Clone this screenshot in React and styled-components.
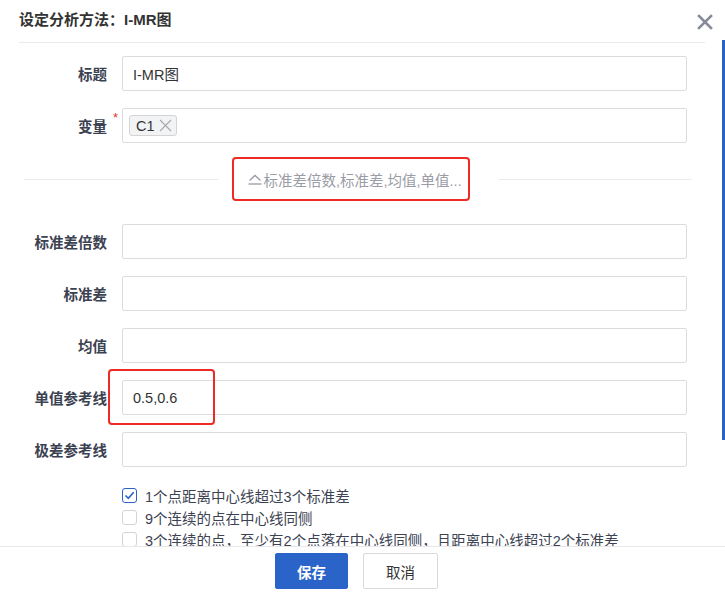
import React from 'react';
import styled, { createGlobalStyle } from 'styled-components';

const Global = createGlobalStyle`
  html, body { margin: 0; padding: 0; background: #fff; }
  body {
    font-family: "Liberation Sans", "Noto Sans CJK SC", sans-serif;
    color: #333;
  }
`;

const Dialog = styled.div`
  position: relative;
  width: 725px;
  height: 594px;
  display: flex;
  flex-direction: column;
  overflow: hidden;
  background: #fff;
`;

const Header = styled.div`
  height: 42px;
  margin: 0 20px 0 19px;
  border-bottom: 1px solid #ebebeb;
  display: flex;
  align-items: center;
`;

const Title = styled.div`
  font-size: 15px;
  font-weight: bold;
  color: #333;
  margin-top: -6px;
`;

const Close = styled.button`
  position: absolute;
  top: 13px;
  right: 11px;
  width: 18px;
  height: 18px;
  padding: 0;
  border: none;
  background: none;
  display: flex;
  align-items: center;
  justify-content: center;
`;

const Scroll = styled.div`
  position: absolute;
  top: 40px;
  right: 0;
  width: 3px;
  height: 400px;
  background: #2a62c9;
`;

const Body = styled.div`
  flex: 1;
  overflow: hidden;
  padding: 13px 38px 0 19px;
`;

const Row = styled.div`
  display: flex;
  align-items: center;
  margin-bottom: 17px;
`;

const Label = styled.label`
  position: relative;
  width: 88px;
  margin-right: 15px;
  text-align: right;
  font-size: 14.5px;
  font-weight: bold;
  color: #3b4150;
  white-space: nowrap;
`;

const Required = styled.span`
  position: absolute;
  right: -11px;
  top: -5px;
  color: #e0382f;
  font-size: 13px;
  font-weight: normal;
`;

const Field = styled.div`
  position: relative;
  flex: 1;
  height: 35px;
  box-sizing: border-box;
  border: 1px solid #dcdcdc;
  border-radius: 2px;
  display: flex;
  align-items: center;
  padding-left: ${p => (p.tags ? '6px' : '10px')};
  font-size: 14.5px;
  color: #333;
`;

const Tag = styled.span`
  display: inline-flex;
  align-items: center;
  gap: 4px;
  height: 21px;
  box-sizing: border-box;
  padding: 0 4px 0 6px;
  border: 1px solid #d4d4d4;
  border-radius: 3px;
  background: #f2f3f5;
  font-size: 14.5px;
  color: #333;
`;

const Mark = styled.div`
  position: absolute;
  left: -15px;
  top: -12px;
  width: 107px;
  height: 56px;
  box-sizing: border-box;
  border: 2px solid #ee2a24;
  border-radius: 4px;
  pointer-events: none;
`;

/* margin-top collapses with the row's 17px bottom margin -> 14px */
const Divider = styled.div`
  display: flex;
  align-items: center;
  margin: -3px -5px 23px 5px;
`;

const Line = styled.div`
  flex: 1;
  height: 1px;
  background: #ebebeb;
`;

const Toggle = styled.div`
  width: 238px;
  height: 44px;
  box-sizing: border-box;
  margin: 0 29px 0 14px;
  padding-left: 13px;
  border: 2px solid #ee2a24;
  border-radius: 4px;
  display: flex;
  align-items: center;
  gap: 1px;
  font-size: 14.5px;
  color: #9a9ca6;
  white-space: nowrap;
`;

const Checks = styled.div`
  margin: 16px 0 0 103px;
`;

const CheckRow = styled.div`
  display: flex;
  align-items: center;
  height: 22px;
  gap: 8px;
  font-size: 14.5px;
  color: #3d4353;
  white-space: nowrap;
`;

const Box = styled.span`
  width: 15px;
  height: 15px;
  box-sizing: border-box;
  border: 1px solid ${p => (p.on ? '#2a62c9' : '#d4d4d4')};
  border-radius: 3px;
  background: #fff;
  display: flex;
  align-items: center;
  justify-content: center;
`;

const Footer = styled.div`
  height: 48px;
  box-sizing: border-box;
  border-top: 1px solid #e8e8e8;
  display: flex;
  justify-content: center;
  align-items: flex-start;
  gap: 15px;
  padding: 6px 12px 0 0;
`;

const Button = styled.button`
  width: ${p => (p.primary ? '73px' : '75px')};
  height: 36px;
  border-radius: 2px;
  font-family: inherit;
  font-size: 14.5px;
  font-weight: ${p => (p.primary ? 'bold' : 'normal')};
  border: 1px solid ${p => (p.primary ? '#2b64c8' : '#d9d9d9')};
  background: ${p => (p.primary ? '#2b64c8' : '#fff')};
  color: ${p => (p.primary ? '#fff' : '#333')};
`;

const fields = [
  { label: '标准差倍数' },
  { label: '标准差' },
  { label: '均值' },
  { label: '单值参考线', value: '0.5,0.6', mark: true },
  { label: '极差参考线' },
];

const rules = [
  { text: '1个点距离中心线超过3个标准差', on: true },
  { text: '9个连续的点在中心线同侧' },
  { text: '3个连续的点，至少有2个点落在中心线同侧，且距离中心线超过2个标准差' },
];

export default function App() {
  return (
    <Dialog>
      <Global />
      <Header>
        <Title>设定分析方法：I-MR图</Title>
      </Header>
      <Close>
        <svg width="16" height="16" viewBox="0 0 16 16">
          <path d="M2 2 L14 14 M14 2 L2 14" stroke="#858b98" strokeWidth="2.6" strokeLinecap="square" />
        </svg>
      </Close>
      <Scroll />
      <Body>
        <Row>
          <Label>标题</Label>
          <Field>I-MR图</Field>
        </Row>
        <Row>
          <Label>变量<Required>*</Required></Label>
          <Field tags>
            <Tag>
              C1
              <svg width="13" height="13" viewBox="0 0 13 13">
                <path d="M1 1 L12 12 M12 1 L1 12" stroke="#a8a8a8" strokeWidth="1.1" />
              </svg>
            </Tag>
          </Field>
        </Row>
        <Divider>
          <Line />
          <Toggle>
            <svg width="16" height="14" viewBox="0 0 16 14">
              <path d="M2.5 8.5 L8 3.5 L13.5 8.5" fill="none" stroke="#9a9ca6" strokeWidth="1.3" />
              <path d="M1.5 12 H14.5" stroke="#9a9ca6" strokeWidth="1.3" />
            </svg>
            标准差倍数,标准差,均值,单值...
          </Toggle>
          <Line />
        </Divider>
        {fields.map(f => (
          <Row key={f.label}>
            <Label>{f.label}</Label>
            <Field>
              {f.value}
              {f.mark && <Mark />}
            </Field>
          </Row>
        ))}
        <Checks>
          {rules.map(r => (
            <CheckRow key={r.text}>
              <Box on={r.on}>
                {r.on && (
                  <svg width="11" height="11" viewBox="0 0 11 11">
                    <path d="M1.5 5.5 L4.3 8.3 L9.7 2.3" fill="none" stroke="#2a62c9" strokeWidth="1.6" />
                  </svg>
                )}
              </Box>
              {r.text}
            </CheckRow>
          ))}
        </Checks>
      </Body>
      <Footer>
        <Button primary>保存</Button>
        <Button>取消</Button>
      </Footer>
    </Dialog>
  );
}
